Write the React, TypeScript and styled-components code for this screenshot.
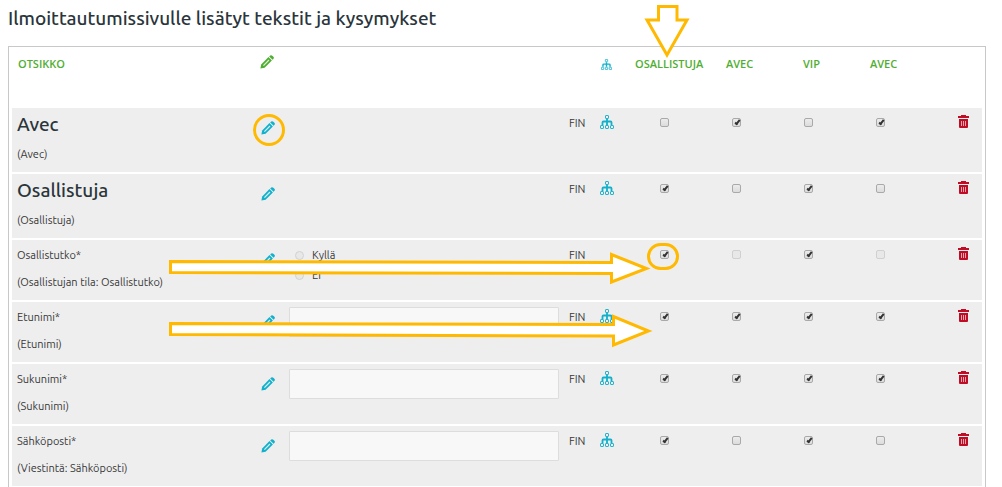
import React from "react";
import styled, { createGlobalStyle, css } from "styled-components";

const GlobalStyle = createGlobalStyle`
  *, *::before, *::after { box-sizing: border-box; }
  body {
    margin: 0;
    background: #fff;
    color: #383838;
    font-family: Ubuntu, "Noto Sans", sans-serif;
    font-size: 11px;
    line-height: 20px;
  }
`;

const Page = styled.main`
  position: relative;
  padding: 6px 16px 0 8px;
`;

const Title = styled.h1`
  margin: 0 0 16px;
  color: #2a353b;
  font-size: 19px;
  font-weight: 500;
  line-height: 24px;
`;

const Panel = styled.section`
  padding: 1px 3px 0;
  border: 1px solid #c8c8c8;
  border-bottom: 0;
`;

const Table = styled.table`
  width: 100%;
  table-layout: fixed;
  border-collapse: separate;
  border-spacing: 0 2px;
`;

const Col = styled.col<{ $width?: number }>`
  width: ${(p) => (p.$width ? `${p.$width}px` : "auto")};
`;

const HeadCell = styled.th<{ $center?: boolean }>`
  height: 56px;
  padding: 4px 6px 0;
  color: #4fae32;
  font-family: "Open Sans", sans-serif;
  font-size: 11px;
  font-weight: 600;
  text-align: left;
  vertical-align: top;
  white-space: nowrap;
  ${(p) => p.$center && css`
    padding: 4px 0 0 7px;
    text-align: center;
  `}
`;

const HeadIcon = styled.span<{ $color: string; $height: number }>`
  display: flex;
  align-items: center;
  justify-content: center;
  height: ${(p) => p.$height}px;
  padding-right: 2px;
  color: ${(p) => p.$color};
`;

const Row = styled.tr`
  background: #eee;
`;

const Cell = styled.td<{ $center?: boolean }>`
  padding: 5px 5px 8px;
  vertical-align: top;
  text-align: ${(p) => (p.$center ? "center" : "left")};
`;

const GroupName = styled.h2`
  margin: 0 0 8px;
  color: #2a353b;
  font-size: 19px;
  font-weight: 500;
  line-height: 23px;
`;

const FieldName = styled.p`
  margin: 0 0 7px;
`;

const Source = styled.p`
  margin: 0;
`;

const IconButton = styled.button<{ $color: string; $height: number }>`
  display: flex;
  align-items: center;
  justify-content: center;
  width: 22px;
  height: ${(p) => p.$height}px;
  margin: 0 auto;
  padding: 0;
  border: 0;
  background: none;
  color: ${(p) => p.$color};
  cursor: pointer;
`;

const TextField = styled.input`
  display: block;
  width: 100%;
  height: 30px;
  border: 1px solid #ddd;
  border-radius: 1px;
  background: #f8f8f8;
`;

const Choice = styled.label`
  display: flex;
  align-items: center;
  gap: 8px;
  padding-left: 6px;
`;

const Radio = styled.input`
  appearance: none;
  width: 9px;
  height: 9px;
  margin: 0;
  border: 1px solid #d2d2d2;
  border-radius: 50%;
  background: #e8e8e8;
`;

const Check = styled.input`
  appearance: none;
  display: block;
  position: relative;
  width: 9px;
  height: 9px;
  margin: 5px auto 0;
  border: 1px solid #a9a9a9;
  border-radius: 2px;
  background: linear-gradient(#ececec, #dcdcdc);

  &:disabled { border-color: #d0d0d0; background: #e8e8e8; }

  &:checked::after {
    content: "";
    position: absolute;
    top: 0;
    left: 3px;
    width: 3px;
    height: 6px;
    border: solid #333;
    border-width: 0 2px 2px 0;
    transform: rotate(38deg);
  }
`;

const Annotations = styled.svg`
  position: absolute;
  top: 0;
  left: 0;
  pointer-events: none;
`;

const Pencil = () => (
  <svg width="14" height="14" viewBox="0 0 14 14" aria-hidden="true">
    <path d="M.4 13.6 1.2 9.4 8.5 2.1 11.9 5.5 4.6 12.8Z" fill="currentColor" />
    <path d="M9.2 1.4 10.2.5Q11.3-.3 12.3.7L13.4 1.8Q14.3 2.8 13.5 3.8L12.6 4.8Z" fill="currentColor" />
    <path d="M3.4 10.6 9 5" stroke="#fff" strokeOpacity=".8" strokeWidth="1.3" />
  </svg>
);

const Tree = ({ size = 14 }: { size?: number }) => (
  <svg width={size} height={size} viewBox="0 0 14 14" fill="none" stroke="currentColor" aria-hidden="true">
    <path d="M7 4V10M2.5 10V7.5Q2.5 6.5 3.5 6.5H10.5Q11.5 6.5 11.5 7.5V10" strokeWidth="1.8" />
    <rect x="5.5" y=".5" width="3" height="3" rx=".6" />
    <rect x=".5" y="10.5" width="3" height="3" rx=".6" />
    <rect x="5.5" y="10.5" width="3" height="3" rx=".6" />
    <rect x="10.5" y="10.5" width="3" height="3" rx=".6" />
  </svg>
);

const Trash = () => (
  <svg width="11" height="13" viewBox="0 0 11 13" aria-hidden="true">
    <path d="M3 0H8V1H11V3H0V1H3Z" fill="currentColor" />
    <path d="M1 4H10V12Q10 13 9 13H2Q1 13 1 12Z" fill="currentColor" />
    <path d="M3.5 6V11M5.5 6V11M7.5 6V11" stroke="#eaa5ad" strokeWidth="1" />
  </svg>
);

type Mark = "on" | "off" | "locked";

type Question = {
  id: string;
  name: string;
  source: string;
  kind: "group" | "choice" | "text";
  marks: Mark[];
};

const audiences = ["OSALLISTUJA", "AVEC", "VIP", "AVEC"];

const questions: Question[] = [
  { id: "avec", name: "Avec", source: "(Avec)", kind: "group", marks: ["off", "on", "off", "on"] },
  { id: "osallistuja", name: "Osallistuja", source: "(Osallistuja)", kind: "group", marks: ["on", "off", "on", "off"] },
  { id: "osallistutko", name: "Osallistutko*", source: "(Osallistujan tila: Osallistutko)", kind: "choice", marks: ["on", "locked", "on", "locked"] },
  { id: "etunimi", name: "Etunimi*", source: "(Etunimi)", kind: "text", marks: ["on", "on", "on", "on"] },
  { id: "sukunimi", name: "Sukunimi*", source: "(Sukunimi)", kind: "text", marks: ["on", "on", "on", "on"] },
  { id: "sahkoposti", name: "Sähköposti*", source: "(Viestintä: Sähköposti)", kind: "text", marks: ["on", "off", "on", "off"] },
];

const QuestionRow = ({ q }: { q: Question }) => (
  <Row>
    <Cell>
      {q.kind === "group" ? <GroupName>{q.name}</GroupName> : <FieldName id={q.id}>{q.name}</FieldName>}
      <Source>{q.source}</Source>
    </Cell>
    <Cell $center>
      <IconButton type="button" $color="#12b0cb" $height={30} aria-label={`Muokkaa: ${q.name}`}>
        <Pencil />
      </IconButton>
    </Cell>
    <Cell>
      {q.kind === "text" && <TextField type="text" aria-labelledby={q.id} />}
      {q.kind === "choice" &&
        ["Kyllä", "Ei"].map((option) => (
          <Choice key={option}>
            <Radio type="radio" name={q.id} disabled />
            {option}
          </Choice>
        ))}
    </Cell>
    <Cell>FIN</Cell>
    <Cell $center>
      {q.kind !== "choice" && (
        <IconButton type="button" $color="#12b0cb" $height={18} aria-label={`Ehdot: ${q.name}`}>
          <Tree />
        </IconButton>
      )}
    </Cell>
    {q.marks.map((mark, i) => (
      <Cell key={i} $center>
        <Check
          type="checkbox"
          defaultChecked={mark === "on"}
          disabled={mark === "locked"}
          aria-label={`${q.name} ${audiences[i]}`}
        />
      </Cell>
    ))}
    <Cell $center />
    <Cell $center>
      <IconButton type="button" $color="#c00d26" $height={16} aria-label={`Poista: ${q.name}`}>
        <Trash />
      </IconButton>
    </Cell>
  </Row>
);

export default function App() {
  return (
    <Page>
      <GlobalStyle />
      <Title>Ilmoittautumissivulle lisätyt tekstit ja kysymykset</Title>
      <Panel>
        <Table>
          <colgroup>
            <Col $width={240} />
            <Col $width={32} />
            <Col />
            <Col $width={22} />
            <Col $width={42} />
            {audiences.map((_, i) => (
              <Col key={i} $width={72} />
            ))}
            <Col $width={28} />
            <Col $width={38} />
          </colgroup>
          <thead>
            <tr>
              <HeadCell>OTSIKKO</HeadCell>
              <HeadCell aria-label="Muokkaa"><HeadIcon $color="#4fae32" $height={16}><Pencil /></HeadIcon></HeadCell>
              <HeadCell />
              <HeadCell />
              <HeadCell aria-label="Ehdot"><HeadIcon $color="#12b0cb" $height={20}><Tree size={11} /></HeadIcon></HeadCell>
              {audiences.map((name, i) => (
                <HeadCell key={i} $center>{name}</HeadCell>
              ))}
              <HeadCell />
              <HeadCell />
            </tr>
          </thead>
          <tbody>
            {questions.map((q) => (
              <QuestionRow key={q.id} q={q} />
            ))}
          </tbody>
        </Table>
      </Panel>
      <Annotations width="700" height="360" fill="none" stroke="#ffb900" strokeWidth="3" aria-hidden="true">
        <path d="M658.5 6.5H677V20H687L667 55 647 20H658.5Z" fill="#fff" />
        <circle cx="269" cy="130" r="14.5" />
        <rect x="648.5" y="244.5" width="29" height="24" rx="12" />
        <path d="M170.5 261.5 611.5 262.5V254.5L646.5 268.5 611.5 282V273.5L170.5 272.5Z" fill="#fff" />
        <path d="M170.5 323.5 613.5 324.5V316.5L648.5 331 613.5 345V336L170.5 334.5Z" fill="#fff" />
      </Annotations>
    </Page>
  );
}
